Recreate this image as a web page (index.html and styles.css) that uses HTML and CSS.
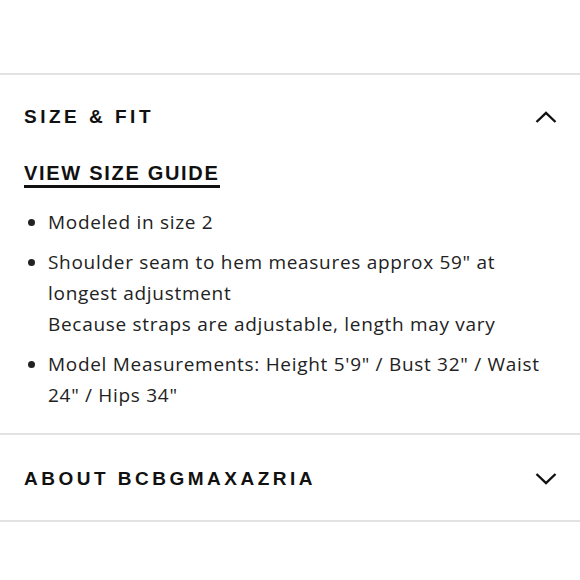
FILE: index.html
```html
<!DOCTYPE html>
<html>
<head>
<meta charset="utf-8">
<link rel="stylesheet" href="styles.css">
</head>
<body>
<div class="page">
  <section class="acc open">
    <div class="acc-head">
      <h2 class="acc-title">SIZE &amp; FIT</h2>
      <svg class="chev" width="22" height="12" viewBox="0 0 22 12"><path d="M1.5 11 L11 2 L20.5 11" fill="none" stroke="#111" stroke-width="2.4"/></svg>
    </div>
    <div class="acc-body">
      <a class="guide">VIEW SIZE GUIDE</a>
      <ul class="list">
        <li>Modeled in size 2</li>
        <li>Shoulder seam to hem measures approx 59" at longest adjustment<br>Because straps are adjustable, length may vary</li>
        <li>Model Measurements: Height 5'9" / Bust 32" / Waist 24" / Hips 34"</li>
      </ul>
    </div>
  </section>
  <section class="acc closed">
    <div class="acc-head">
      <h2 class="acc-title">ABOUT BCBGMAXAZRIA</h2>
      <svg class="chev" width="22" height="12" viewBox="0 0 22 12"><path d="M1.5 1 L11 10 L20.5 1" fill="none" stroke="#111" stroke-width="2.4"/></svg>
    </div>
  </section>
</div>
</body>
</html>
```
FILE: styles.css
```css
html, body {
  margin: 0;
  padding: 0;
  background: #fff;
}
.page {
  padding-top: 73px;
  font-family: "Open Sans", "Liberation Sans", sans-serif;
  color: #222;
}
.acc {
  border-top: 2px solid #e2e2e2;
}
.acc.closed {
  border-bottom: 2px solid #e2e2e2;
}
.acc-head {
  display: flex;
  justify-content: space-between;
  align-items: center;
  padding: 30px 23px 0 24px;
}
.closed .acc-head {
  padding: 32px 23px 29px 24px;
}
.acc-title {
  margin: 0;
  font-family: "Liberation Sans", Arial, sans-serif;
  font-weight: 700;
  font-size: 19px;
  line-height: 24px;
  letter-spacing: 3.5px;
  color: #111;
}
.chev {
  display: block;
}
.acc-body {
  padding: 32px 24px 22px 24px;
}
.guide {
  display: inline-block;
  font-family: "Liberation Sans", Arial, sans-serif;
  font-weight: 700;
  font-size: 20px;
  line-height: 24px;
  letter-spacing: 1.7px;
  color: #111;
  border-bottom: 3px solid #111;
}
.list {
  margin: 19px 0 0 0;
  padding: 0 0 0 24px;
  font-size: 19px;
  line-height: 31px;
  letter-spacing: 0.7px;
}
.list li {
  margin-bottom: 9px;
}
.list li:last-child {
  margin-bottom: 0;
}
```
